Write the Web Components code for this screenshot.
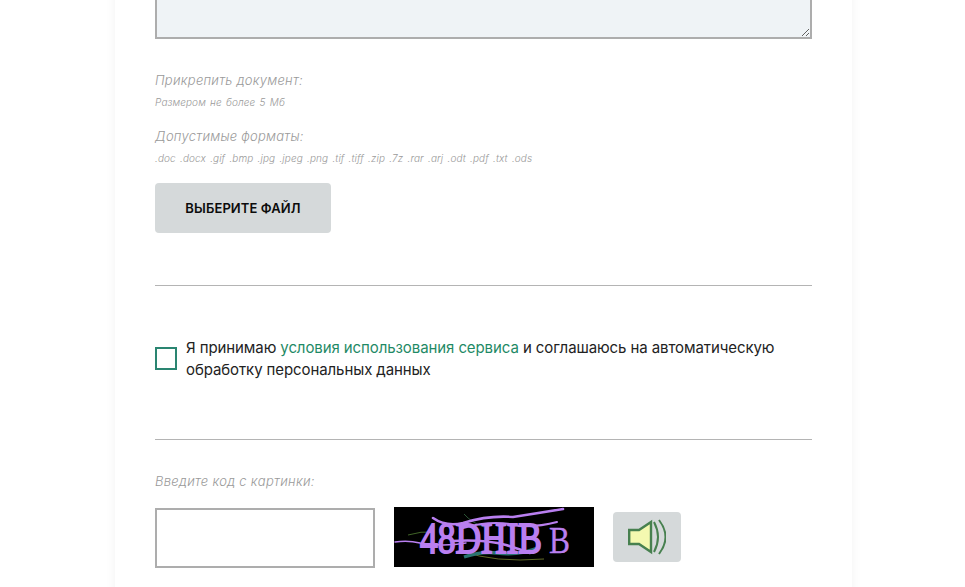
<!DOCTYPE html>
<html lang="ru">
<head>
<meta charset="utf-8">
<title>Форма</title>
<style>
    html, body { margin: 0; height: 587px; overflow: hidden; background: #fff; }
    body { font-family: "Inter", "Liberation Sans", sans-serif; color: #222; }
</style>
</head>
<body>
<form-card>
    <message-box></message-box>
    <file-note label="Прикрепить документ:" hint="Размером не более 5 Мб"></file-note>
    <file-note label="Допустимые форматы:" hint=".doc .docx .gif .bmp .jpg .jpeg .png .tif .tiff .zip .7z .rar .arj .odt .pdf .txt .ods"></file-note>
    <file-button>Выберите файл</file-button>
    <form-rule></form-rule>
    <agree-check>Я принимаю <a href="#">условия использования сервиса</a> и соглашаюсь на автоматическую обработку персональных данных</agree-check>
    <form-rule></form-rule>
    <captcha-row label="Введите код с картинки:"></captcha-row>
</form-card>

<script>
// === Card ===
class FormCard extends HTMLElement {
    constructor() {
        super();
        this.attachShadow({ mode: 'open' });
        this.shadowRoot.innerHTML = `
            <style>
                :host {
                    display: flex;
                    flex-direction: column;
                    box-sizing: border-box;
                    width: 737px;
                    margin: -81px 0 0 115px;
                    padding: 0 40px 40px;
                    background: #fff;
                    box-shadow: 0 0 10px rgb(0 0 0 / 0.06);
                }
            </style>
            <slot></slot>`;
    }
}
customElements.define('form-card', FormCard);

// === Textarea ===
class MessageBox extends HTMLElement {
    constructor() {
        super();
        this.attachShadow({ mode: 'open' });
        this.shadowRoot.innerHTML = `
            <style>
                :host { display: block; margin-bottom: 31px; }
                textarea {
                    display: block;
                    box-sizing: border-box;
                    width: 657px;
                    height: 120px;
                    margin: 0;
                    background: #eff3f6;
                    border: 2px solid #adadad;
                    border-radius: 0;
                    outline: none;
                }
            </style>
            <textarea></textarea>`;
    }
}
customElements.define('message-box', MessageBox);

// === Label with small hint ===
class FileNote extends HTMLElement {
    constructor() {
        super();
        this.attachShadow({ mode: 'open' });
        this.shadowRoot.innerHTML = `
            <style>
                :host { display: block; margin-bottom: 18px; font-style: italic; color: #9a9a9a; }
                .label { font-size: 13px; font-weight: 300; line-height: 20px; letter-spacing: 0.25px; }
                .hint { margin-top: 6px; font-size: 10px; font-weight: 300; line-height: 12px; letter-spacing: 0.1px; word-spacing: 1.3px; }
            </style>
            <div class="label"></div>
            <div class="hint"></div>`;
    }
    connectedCallback() {
        this.shadowRoot.querySelector('.label').textContent = this.getAttribute('label');
        this.shadowRoot.querySelector('.hint').textContent = this.getAttribute('hint');
    }
}
customElements.define('file-note', FileNote);

// === Button ===
class FileButton extends HTMLElement {
    constructor() {
        super();
        this.attachShadow({ mode: 'open' });
        this.shadowRoot.innerHTML = `
            <style>
                :host {
                    display: flex;
                    align-items: center;
                    justify-content: center;
                    width: 176px;
                    height: 50px;
                    margin-top: 1px;
                    background: #d5d9da;
                    border-radius: 4px;
                    color: #0c0c0c;
                    font-size: 13px;
                    font-weight: 600;
                    letter-spacing: 0.1px;
                    text-transform: uppercase;
                }
            </style>
            <slot></slot>`;
    }
}
customElements.define('file-button', FileButton);

// === Divider ===
class FormRule extends HTMLElement {
    constructor() {
        super();
        this.attachShadow({ mode: 'open' });
        this.shadowRoot.innerHTML = `
            <style>
                :host { display: block; height: 1px; background: #b4b4b4; margin-top: 52px; }
            </style>`;
    }
}
customElements.define('form-rule', FormRule);

// === Agreement checkbox ===
class AgreeCheck extends HTMLElement {
    constructor() {
        super();
        this.attachShadow({ mode: 'open' });
        this.shadowRoot.innerHTML = `
            <style>
                :host {
                    display: flex;
                    align-items: center;
                    gap: 9px;
                    margin: 51px 0 6px 0;
                    font-size: 15px;
                    line-height: 22px;
                    letter-spacing: -0.09px;
                    color: #222;
                }
                .box {
                    flex: none;
                    box-sizing: border-box;
                    width: 22px;
                    height: 23px;
                    margin-top: -2px;
                    border: 2px solid #2a8571;
                }
                .text { width: 626px; }
                ::slotted(a) { color: #1f8a66; text-decoration: none; }
            </style>
            <div class="box"></div>
            <div class="text"><slot></slot></div>`;
    }
}
customElements.define('agree-check', AgreeCheck);

// === Captcha ===
class CaptchaRow extends HTMLElement {
    constructor() {
        super();
        this.attachShadow({ mode: 'open' });
        this.shadowRoot.innerHTML = `
            <style>
                :host { display: block; margin-top: 31px; }
                .label { font-size: 13px; font-weight: 300; line-height: 20px; font-style: italic; color: #9a9a9a; letter-spacing: 0.27px; }
                .row { display: flex; align-items: flex-start; margin-top: 16px; }
                input {
                    box-sizing: border-box;
                    width: 220px;
                    height: 60px;
                    margin: 1px 19px 0 0;
                    border: 2px solid #adadad;
                    background: #fff;
                    outline: none;
                }
                .picture { display: block; flex: none; width: 200px; height: 60px; }
                .sound {
                    display: flex;
                    align-items: center;
                    justify-content: center;
                    width: 68px;
                    height: 50px;
                    margin: 5px 0 0 19px;
                    background: #d5d9da;
                    border-radius: 4px;
                }
            </style>
            <div class="label"></div>
            <div class="row">
                <input type="text">
                <svg class="picture" viewBox="0 0 200 60">
                    <rect width="200" height="60" fill="#000"/>
                    <path d="M14 28 Q27 24 40 25" fill="none" stroke="#5d8f3a" stroke-width=".7"/>
                    <path d="M70 7 Q78 16 90 20" fill="none" stroke="#3f7a4d" stroke-width=".7"/>
                    <path d="M68 44 Q100 56 150 52" fill="none" stroke="#8c9a3a" stroke-width=".7"/>
                    <path d="M70 50 Q88 44 103 46 Q125 49 146 40" fill="none" stroke="#2a7471" stroke-width="3.4"/>
                    <g fill="#b97ff0" stroke="#b97ff0" font-family="Liberation Serif, serif">
                        <text x="26" y="46" font-size="44" stroke-width="1.9" textLength="122" lengthAdjust="spacingAndGlyphs">48DHIB</text>
                        <text x="155" y="46" font-size="37" stroke-width=".3" textLength="21" lengthAdjust="spacingAndGlyphs">B</text>
                    </g>
                    <g fill="none" stroke="#b97ff0" stroke-linecap="round">
                        <path d="M1 35 Q14 33 26 36 Q50 40 72 36" stroke-width="1.5"/>
                        <path d="M39 11 Q52 20 69 16 Q95 8 119 10 Q145 6 169 2" stroke-width="2.6"/>
                        <path d="M69 21 Q100 12 125 19 Q145 20 163 15" stroke-width="2"/>
                        <path d="M58 34 Q90 32 112 38 Q125 42 136 46" stroke-width="2.4"/>
                    </g>
                </svg>
                <div class="sound">
                    <svg width="38" height="36" viewBox="0 0 38 36" fill="none">
                        <path d="M1.2 11 H11 L23 3 V33 L11 25 H1.2 Z" fill="#f4f9b0" stroke="#47804f" stroke-width="2.4"/>
                        <path d="M26 3 Q34 18 26 33" stroke="#47804f" stroke-width="2"/>
                        <path d="M31 1 Q44 18 31 35" stroke="#47804f" stroke-width="2"/>
                    </svg>
                </div>
            </div>`;
    }
    connectedCallback() {
        this.shadowRoot.querySelector('.label').textContent = this.getAttribute('label');
    }
}
customElements.define('captcha-row', CaptchaRow);
</script>
</body>
</html>
